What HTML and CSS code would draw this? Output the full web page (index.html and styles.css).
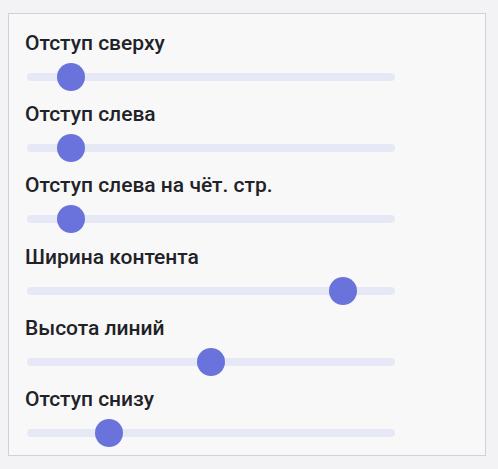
FILE: index.html
```html
<!DOCTYPE html>
<html lang="ru">
<head>
<meta charset="utf-8">
<link rel="stylesheet" href="styles.css">
</head>
<body>
<div class="panel">
  <div class="row">
    <div class="label">Отступ сверху</div>
    <div class="track"><div class="thumb" style="left:12%"></div></div>
  </div>
  <div class="row">
    <div class="label">Отступ слева</div>
    <div class="track"><div class="thumb" style="left:12%"></div></div>
  </div>
  <div class="row">
    <div class="label">Отступ слева на чёт. стр.</div>
    <div class="track"><div class="thumb" style="left:12%"></div></div>
  </div>
  <div class="row">
    <div class="label">Ширина контента</div>
    <div class="track"><div class="thumb" style="left:85.9%"></div></div>
  </div>
  <div class="row">
    <div class="label">Высота линий</div>
    <div class="track"><div class="thumb" style="left:50%"></div></div>
  </div>
  <div class="row">
    <div class="label">Отступ снизу</div>
    <div class="track"><div class="thumb" style="left:22.3%"></div></div>
  </div>
</div>
</body>
</html>
```

FILE: styles.css
```css
html, body {
  margin: 0;
  padding: 0;
  background: #f3f3f5;
}
body {
  padding: 13px 12px 0 8px;
  font-family: Roboto, "Noto Sans", sans-serif;
}
.panel {
  box-sizing: border-box;
  width: 478px;
  height: 443px;
  background: #f8f8f8;
  border: 1px solid #d2d2d4;
  padding: 17px 16px 0 16px;
  display: flex;
  flex-direction: column;
}
.row {
  height: 71.2px;
  flex: none;
  display: flex;
  flex-direction: column;
}
.label {
  font-size: 21px;
  font-weight: 500;
  color: #1f2227;
  line-height: 24px;
  white-space: nowrap;
}
.track {
  position: relative;
  margin: 18px 0 0 2px;
  width: 368px;
  height: 8px;
  border-radius: 4px;
  background: #e6e8f6;
}
.thumb {
  position: absolute;
  top: 50%;
  width: 28px;
  height: 28px;
  border-radius: 50%;
  background: #6a73dc;
  transform: translate(-50%, -50%);
}
```
